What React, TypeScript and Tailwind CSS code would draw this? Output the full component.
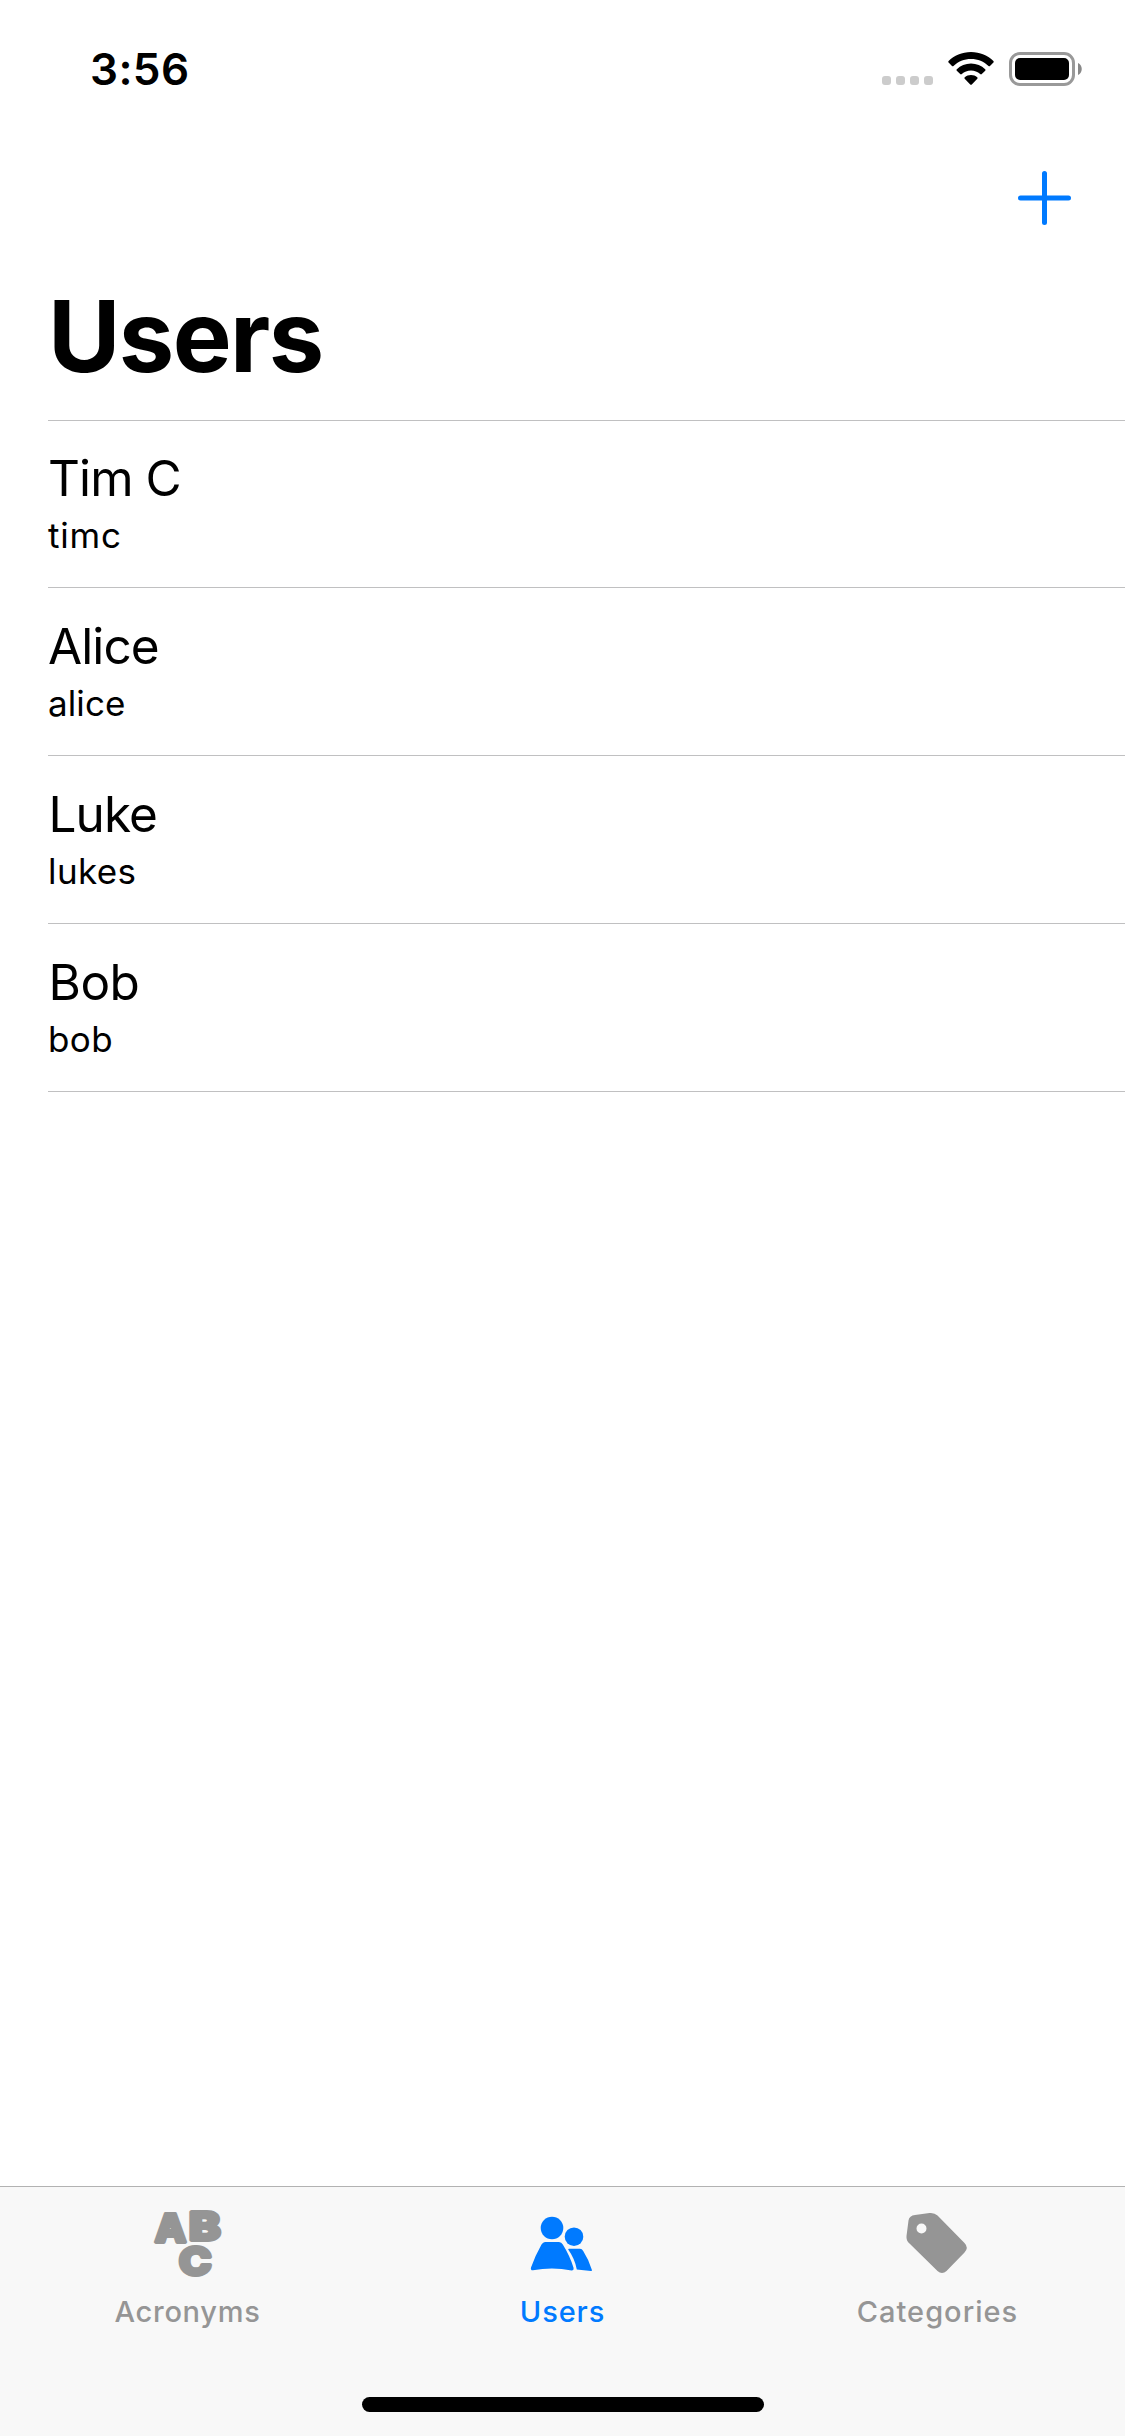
import React from "react";

const users = [
  { name: "Tim C", username: "timc", rowClass: "h-[167px] pt-[27px]", nameClass: "tracking-[-0.9px]", userClass: "tracking-[0.8px]" },
  { name: "Alice", username: "alice", rowClass: "h-[168px] pt-[28px]", nameClass: "tracking-[-0.9px]", userClass: "tracking-[0.1px]" },
  { name: "Luke", username: "lukes", rowClass: "h-[168px] pt-[28px]", nameClass: "pl-[0.5px] tracking-[-0.9px]", userClass: "tracking-[0.4px]" },
  { name: "Bob", username: "bob", rowClass: "h-[168px] pt-[28px]", nameClass: "pl-[0.5px] tracking-[-0.5px]", userClass: "tracking-[0.4px]" },
];

function StatusBar() {
  return (
    <header className="flex h-[132px] items-start justify-between pl-[90px] pr-[43px] pt-[42px]">
      <time className="text-[44px] font-semibold leading-[54px] tracking-[0.4px]">3:56</time>
      <div className="flex items-start pt-[10px]">
        <div className="flex gap-[5px] pt-[24px]">
          {[0, 1, 2, 3].map((dot) => (
            <span key={dot} className="size-[9px] rounded-[3px] bg-[#cccccc]" />
          ))}
        </div>
        <svg className="ml-[15px]" width="46" height="34" viewBox="0 0 46 34">
          <path d="M23 0C32 0 40 3.5 45.4 9q.7.8 0 1.6L42 14q-.7.7-1.5 0C36 9.500 29.800 7 23 7S10 9.500 5.500 14q-.8.7-1.500 0L.6 10.600q-.7-.8 0-1.600C6 3.500 14 0 23 0Z" />
          <path d="M23 11.500c5.500 0 10.500 2.200 14.200 5.700q.8.8 0 1.600L33.800 22.100q-.8.700-1.600 0C29.700 19.800 26.500 18.500 23 18.500s-6.700 1.300-9.200 3.600q-.8.700-1.600 0L8.800 18.800q-.8-.8 0-1.600C12.500 13.700 17.500 11.500 23 11.500Z" />
          <path d="M23 23c2.500 0 4.500.9 6.200 2.200q.9.800.1 1.600l-5.500 5.600q-.8.800-1.600 0l-5.500-5.600q-.8-.8.1-1.600C18.500 23.900 20.500 23 23 23Z" />
        </svg>
        <svg className="ml-[15px]" width="73" height="34" viewBox="0 0 73 34">
          <rect x="1.500" y="1.500" width="63" height="31" rx="9.500" fill="none" stroke="#999999" strokeWidth="3" />
          <rect x="6" y="6" width="54" height="22" rx="5" />
          <path d="M69 11c5 2 5 10 0 12Z" fill="#888888" />
        </svg>
      </div>
    </header>
  );
}

function AcronymsIcon() {
  return (
    <svg className="overflow-visible" width="72" height="72" viewBox="0 0 72 72" fill="currentColor" stroke="currentColor" strokeLinejoin="round" strokeWidth="3.8" fontFamily="Inter, sans-serif" fontWeight="800" fontSize="38">
      <text x="3" y="33.500" textLength="31" lengthAdjust="spacingAndGlyphs">A</text>
      <text x="37" y="32" textLength="31.500" lengthAdjust="spacingAndGlyphs">B</text>
      <text x="27" y="67" textLength="32.500" lengthAdjust="spacingAndGlyphs">C</text>
    </svg>
  );
}

function UsersIcon() {
  return (
    <svg width="72" height="72" viewBox="0 0 72 72" fill="currentColor">
      <circle cx="25" cy="20" r="11.300" />
      <circle cx="47" cy="28.700" r="9.300" />
      <path d="M18 34h14q2.500 0 3.800 2.500Q43 48 46.600 60q.5 2.700-2 2.400Q25 58.500 6 62.300q-2.700.2-2-2.800Q8.500 47 14.500 36.500 16 34 18 34Z" />
      <path d="M42 40.800h11q2 0 3.200 2.200Q62 52 65 62.200q0 .8-1 .7L49.800 61.600Q48 51 41.200 41.500q0-.7.8-.7Z" />
    </svg>
  );
}

function CategoriesIcon() {
  return (
    <svg width="72" height="72" viewBox="0 0 72 72" fill="currentColor">
      <path fillRule="evenodd" d="M13 7 27.500 5q5-.5 8 2.500L62.500 35q4.500 4.500 0 9.500L44.500 63q-4.500 4-9 0L7.500 35.500Q4 32.500 4.500 28L6.500 12.500Q7.300 7.700 13 7ZM19.500 15.500a5 5 0 1 0 0 10 5 5 0 0 0 0-10Z" />
    </svg>
  );
}

const tabs = [
  { label: "Acronyms", Icon: AcronymsIcon, className: "text-[#959595]", labelClass: "tracking-[0.7px]" },
  { label: "Users", Icon: UsersIcon, className: "text-[#007aff]", labelClass: "tracking-[0.9px]" },
  { label: "Categories", Icon: CategoriesIcon, className: "text-[#959595]", labelClass: "tracking-[1px]" },
];

export default function App() {
  return (
    <div className="flex h-[2436px] w-[1125px] flex-col overflow-hidden bg-white font-['Inter',sans-serif] text-black">
      <StatusBar />
      <div className="flex h-[132px] justify-end pr-[53px] pt-[38px]">
        <button aria-label="Add user" className="size-[56px] text-[#007aff]">
          <svg width="56" height="56" viewBox="0 0 56 56" fill="none" stroke="currentColor" strokeWidth="5" strokeLinecap="round">
            <path d="M28.500 3.500v49M4.500 28h48" />
          </svg>
        </button>
      </div>
      <h1 className="h-[156px] pl-[48px] pt-[12px] text-[99px] font-bold leading-[120px] tracking-[-1.6px]">Users</h1>
      <ul className="ml-[48px] h-[672px] border-t border-[#c0c0c1]">
        {users.map((user) => (
          <li key={user.username} className={`flex flex-col gap-[5px] border-b border-[#c0c0c1] ${user.rowClass}`}>
            <span className={`text-[49.5px] leading-[60px] ${user.nameClass}`}>{user.name}</span>
            <span className={`text-[35px] leading-[44px] ${user.userClass}`}>{user.username}</span>
          </li>
        ))}
      </ul>
      <nav className="mt-auto flex h-[250px] flex-col items-center border-t border-[#b2b2b2] bg-[#f8f8f8]">
        <div className="grid w-full grid-cols-3">
          {tabs.map(({ label, Icon, className, labelClass }) => (
            <div key={label} className={`flex flex-col items-center pt-[21px] ${className}`}>
              <Icon />
              <span className={`mt-[14px] text-[29px] font-medium leading-[36px] ${labelClass}`}>{label}</span>
            </div>
          ))}
        </div>
        <div className="mb-[24px] mt-auto h-[15px] w-[402px] rounded-full bg-black" />
      </nav>
    </div>
  );
}
